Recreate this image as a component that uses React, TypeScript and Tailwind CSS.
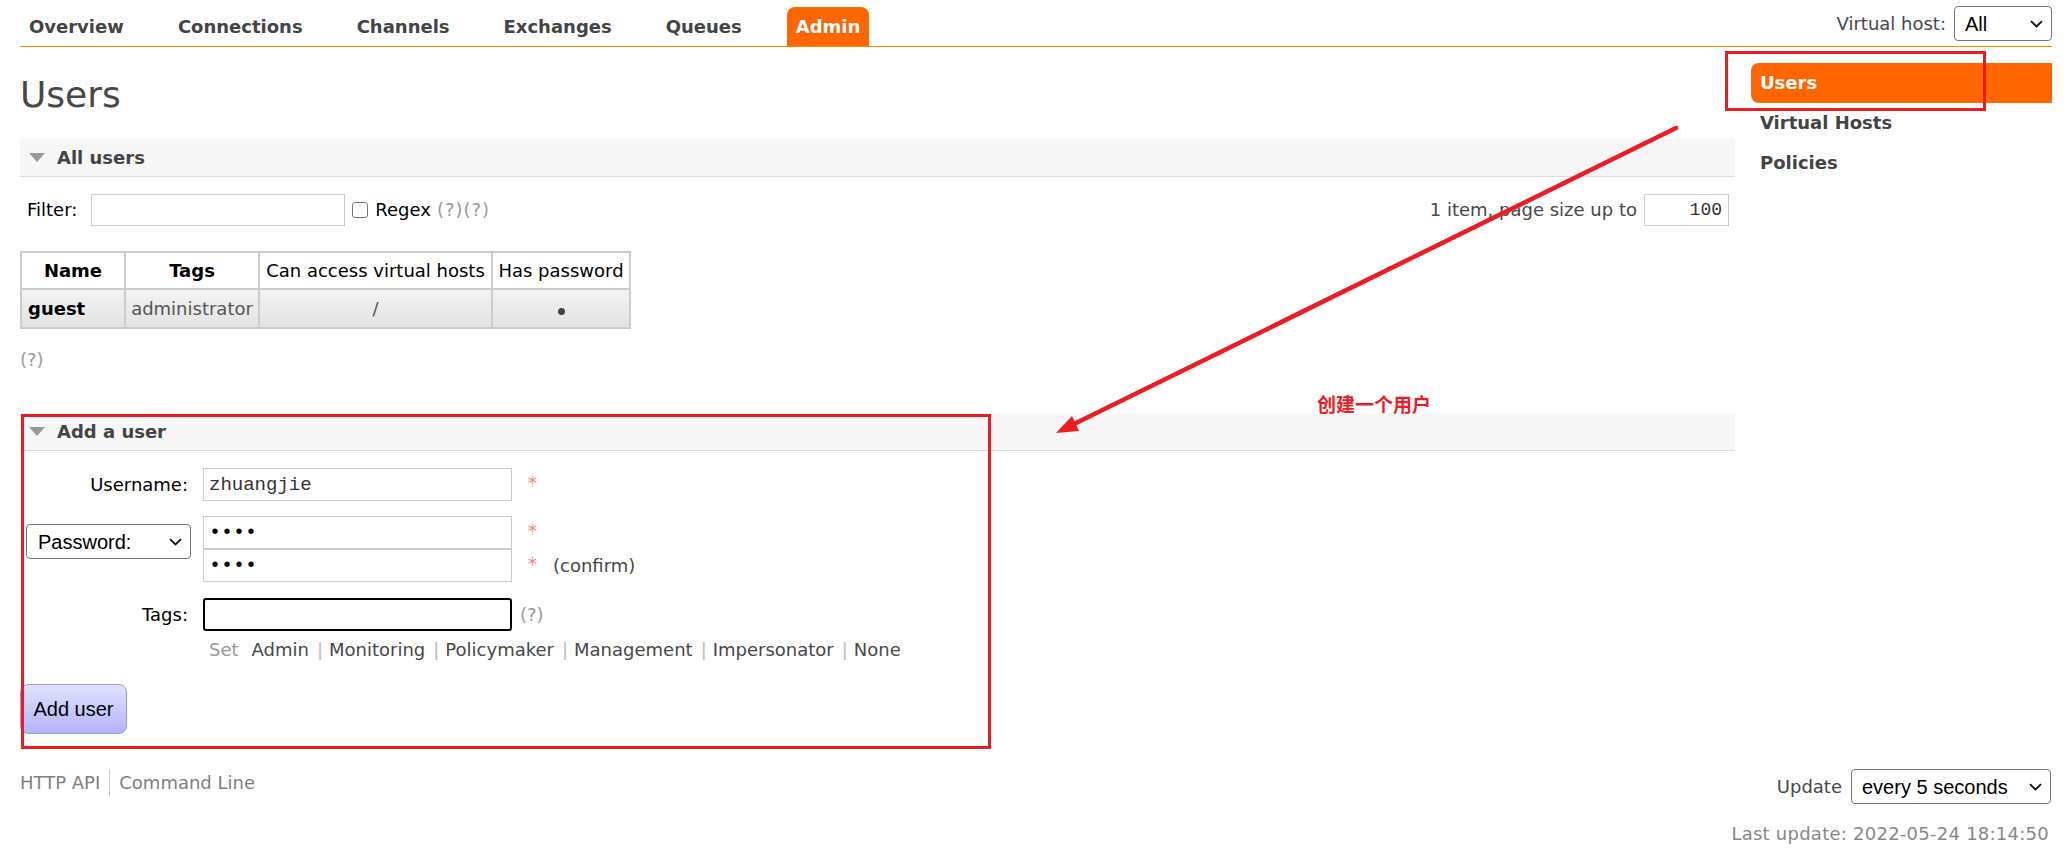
import React from 'react';

const tabs = ['Overview', 'Connections', 'Channels', 'Exchanges', 'Queues', 'Admin'];
const tagLinks = ['Monitoring', 'Policymaker', 'Management', 'Impersonator', 'None'];

const Chevron = () => (
  <svg width="13" height="8" viewBox="0 0 13 8" className="shrink-0">
    <path d="M1 1.2l5.5 5.3 5.5-5.3" fill="none" stroke="#111" strokeWidth="1.8" />
  </svg>
);

const SelectBox = ({ label, className }: { label: string; className: string }) => (
  <div
    className={`flex items-center justify-between rounded-[4px] border border-[#767676] bg-white pr-[8px] font-['Liberation_Sans',Arial,sans-serif] text-[20px] text-black ${className}`}
  >
    <span>{label}</span>
    <Chevron />
  </div>
);

const SectionBar = ({ title, className }: { title: string; className: string }) => (
  <div className={`flex h-[38px] items-center border-b border-[#ddd] bg-[#f7f7f7] pl-[9px] ${className}`}>
    <svg width="16" height="9" viewBox="0 0 16 9">
      <polygon points="0,0 16,0 8,9" fill="#999" />
    </svg>
    <h2 className="ml-[12px] text-[18px] font-bold text-[#444]">{title}</h2>
  </div>
);

const Star = () => <span className="ml-[16px] mt-[4px] self-start text-[#f77]">*</span>;

export default function App() {
  return (
    <div className="relative min-h-[861px] w-full bg-white pl-[20px] pr-[17px] font-['DejaVu_Sans',Verdana,sans-serif] text-[18px] leading-[22px] text-[#484848]">
      {/* Top nav */}
      <header className="flex h-[47px] items-end justify-between border-b border-[#f80]">
        <nav className="flex items-end gap-[36px]">
          {tabs.map((t) => (
            <a
              key={t}
              className={
                t === 'Admin'
                  ? 'flex h-[39px] items-center rounded-t-[8px] bg-[#f60] px-[9px] font-bold text-white'
                  : 'flex h-[39px] items-center px-[9px] font-bold text-[#444]'
              }
            >
              {t}
            </a>
          ))}
        </nav>
        <div className="mb-[5px] flex items-center gap-[8px]">
          <span>Virtual host:</span>
          <SelectBox label="All" className="h-[35px] w-[98px] pl-[10px]" />
        </div>
      </header>

      <div className="flex gap-[16px]">
        <main className="w-[1715px]">
          <h1 className="mt-[26px] text-[36px] font-normal leading-[43px] text-[#484848]">Users</h1>

          <SectionBar title="All users" className="mt-[23px]" />

          {/* Filter row */}
          <div className="mt-[17px] flex h-[32px] items-center justify-between">
            <div className="flex items-center">
              <span className="ml-[7px] text-black">Filter:</span>
              <input className="ml-[14px] h-[32px] w-[254px] border border-[#ccc] px-[4px] outline-none" />
              <span className="ml-[7px] h-[16px] w-[16px] rounded-[3px] border border-[#767676] bg-white" />
              <span className="ml-[7px] text-black">Regex</span>
              <span className="ml-[6px] tracking-[1px] text-[#999]">(?)(?)</span>
            </div>
            <div className="mr-[6px] flex items-center gap-[7px]">
              <span>1 item, page size up to</span>
              <input
                defaultValue="100"
                className="h-[32px] w-[85px] border border-[#ccc] pr-[6px] text-right font-['Liberation_Mono','Courier_New',monospace] text-[18px] text-[#333] outline-none"
              />
            </div>
          </div>

          {/* Users table */}
          <table className="mt-[25px] border-collapse">
            <thead>
              <tr className="h-[37px] text-black">
                <th className="w-[104px] border-2 border-[#ccc] font-bold">Name</th>
                <th className="w-[134px] border-2 border-[#ccc] font-bold">Tags</th>
                <th className="w-[233px] border-2 border-[#ccc] font-normal">Can access virtual hosts</th>
                <th className="w-[138px] border-2 border-[#ccc] font-normal">Has password</th>
              </tr>
            </thead>
            <tbody>
              <tr className="h-[39px]">
                <td className="border-2 border-[#ccc] bg-gradient-to-b from-[#f3f3f3] to-[#e3e3e3] pl-[6px] font-bold text-black">
                  guest
                </td>
                <td className="border-2 border-[#ccc] bg-gradient-to-b from-[#f3f3f3] to-[#e3e3e3] text-center text-[#555]">
                  administrator
                </td>
                <td className="border-2 border-[#ccc] bg-gradient-to-b from-[#f3f3f3] to-[#e3e3e3] text-center text-[#555]">
                  /
                </td>
                <td className="border-2 border-[#ccc] bg-gradient-to-b from-[#f3f3f3] to-[#e3e3e3] text-center">
                  <span className="inline-block h-[7px] w-[7px] rounded-full bg-[#444]" />
                </td>
              </tr>
            </tbody>
          </table>

          <p className="mt-[20px] text-[#999]">(?)</p>

          <SectionBar title="Add a user" className="mt-[42px]" />

          {/* Add user form */}
          <div className="mt-[17px] flex h-[33px] items-center">
            <span className="w-[168px] text-right text-black">Username:</span>
            <input
              defaultValue="zhuangjie"
              className="ml-[15px] h-[33px] w-[309px] border border-[#ccc] px-[5px] font-['Liberation_Mono','Courier_New',monospace] text-[19px] text-[#333] outline-none"
            />
            <Star />
          </div>

          <div className="mt-[15px] flex">
            <div className="flex w-[171px] justify-end pt-[8px]">
              <SelectBox label="Password:" className="h-[35px] w-[165px] pl-[11px]" />
            </div>
            <div className="ml-[12px] flex flex-col">
              <div className="flex h-[33px] items-center">
                <input
                  type="password"
                  defaultValue="1234"
                  className="h-[33px] w-[309px] border border-[#ccc] px-[5px] font-['Liberation_Mono','Courier_New',monospace] text-[20px] text-black outline-none"
                />
                <Star />
              </div>
              <div className="flex h-[33px] items-center">
                <input
                  type="password"
                  defaultValue="1234"
                  className="h-[33px] w-[309px] border border-[#ccc] px-[5px] font-['Liberation_Mono','Courier_New',monospace] text-[20px] text-black outline-none"
                />
                <Star />
                <span className="ml-[16px]">(confirm)</span>
              </div>
            </div>
          </div>

          <div className="mt-[16px] flex h-[33px] items-center">
            <span className="w-[168px] text-right text-black">Tags:</span>
            <input className="ml-[15px] h-[33px] w-[309px] rounded-[3px] border-2 border-black px-[5px] outline-none" />
            <span className="ml-[8px] text-[#999]">(?)</span>
          </div>

          <div className="ml-[189px] mt-[8px] flex items-center">
            <span className="text-[#999]">Set</span>
            <span className="ml-[13px]">Admin</span>
            {tagLinks.map((n) => (
              <React.Fragment key={n}>
                <span className="ml-[8px] mr-[6px] text-[#bbb]">|</span>
                <span>{n}</span>
              </React.Fragment>
            ))}
          </div>

          <button className="mt-[23px] h-[50px] w-[107px] rounded-[8px] border border-[#9a9af0] bg-gradient-to-b from-[#e2e2ff] to-[#b3b3fa] font-['Liberation_Sans',Arial,sans-serif] text-[20px] text-black">
            Add user
          </button>
        </main>

        {/* Right hand menu */}
        <aside className="mt-[16px] flex-1">
          <div className="flex h-[40px] items-center rounded-l-[8px] bg-[#f60] pl-[9px] font-bold text-white">Users</div>
          <div className="flex h-[40px] items-center pl-[9px] font-bold text-[#444]">Virtual Hosts</div>
          <div className="flex h-[40px] items-center pl-[9px] font-bold text-[#444]">Policies</div>
        </aside>
      </div>

      {/* Footer */}
      <footer className="mt-[35px] flex justify-between">
        <div className="flex h-[27px] items-center text-[#808080]">
          <span className="pr-[9px]">HTTP API</span>
          <span className="flex h-full items-center border-l border-[#ccc] pl-[9px]">Command Line</span>
        </div>
        <div className="flex flex-col items-end">
          <div className="mr-[1px] flex items-center gap-[9px]">
            <span>Update</span>
            <SelectBox label="every 5 seconds" className="h-[35px] w-[200px] pl-[10px]" />
          </div>
          <div className="mr-[3px] mt-[19px] tracking-[0.25px] text-[#888]">Last update: 2022-05-24 18:14:50</div>
        </div>
      </footer>

      {/* Annotations */}
      <div className="pointer-events-none absolute left-[1725px] top-[51px] h-[60px] w-[261px] border-[3px] border-[#ed1c24]" />
      <div className="pointer-events-none absolute left-[21px] top-[414px] h-[335px] w-[970px] border-[3px] border-[#ed1c24]" />
      <span className="pointer-events-none absolute left-[1317px] top-[394px] font-['Noto_Sans_CJK_SC',sans-serif] text-[19px] font-bold leading-none text-[#ed1c24]">
        创建一个用户
      </span>
      <svg className="pointer-events-none absolute left-0 top-0" width="2069" height="861">
        <line x1="1676" y1="128" x2="1074" y2="424" stroke="#ed1c24" strokeWidth="4.5" strokeLinecap="round" />
        <polygon points="1056,433 1079,431 1072,416" fill="#ed1c24" />
      </svg>
    </div>
  );
}
